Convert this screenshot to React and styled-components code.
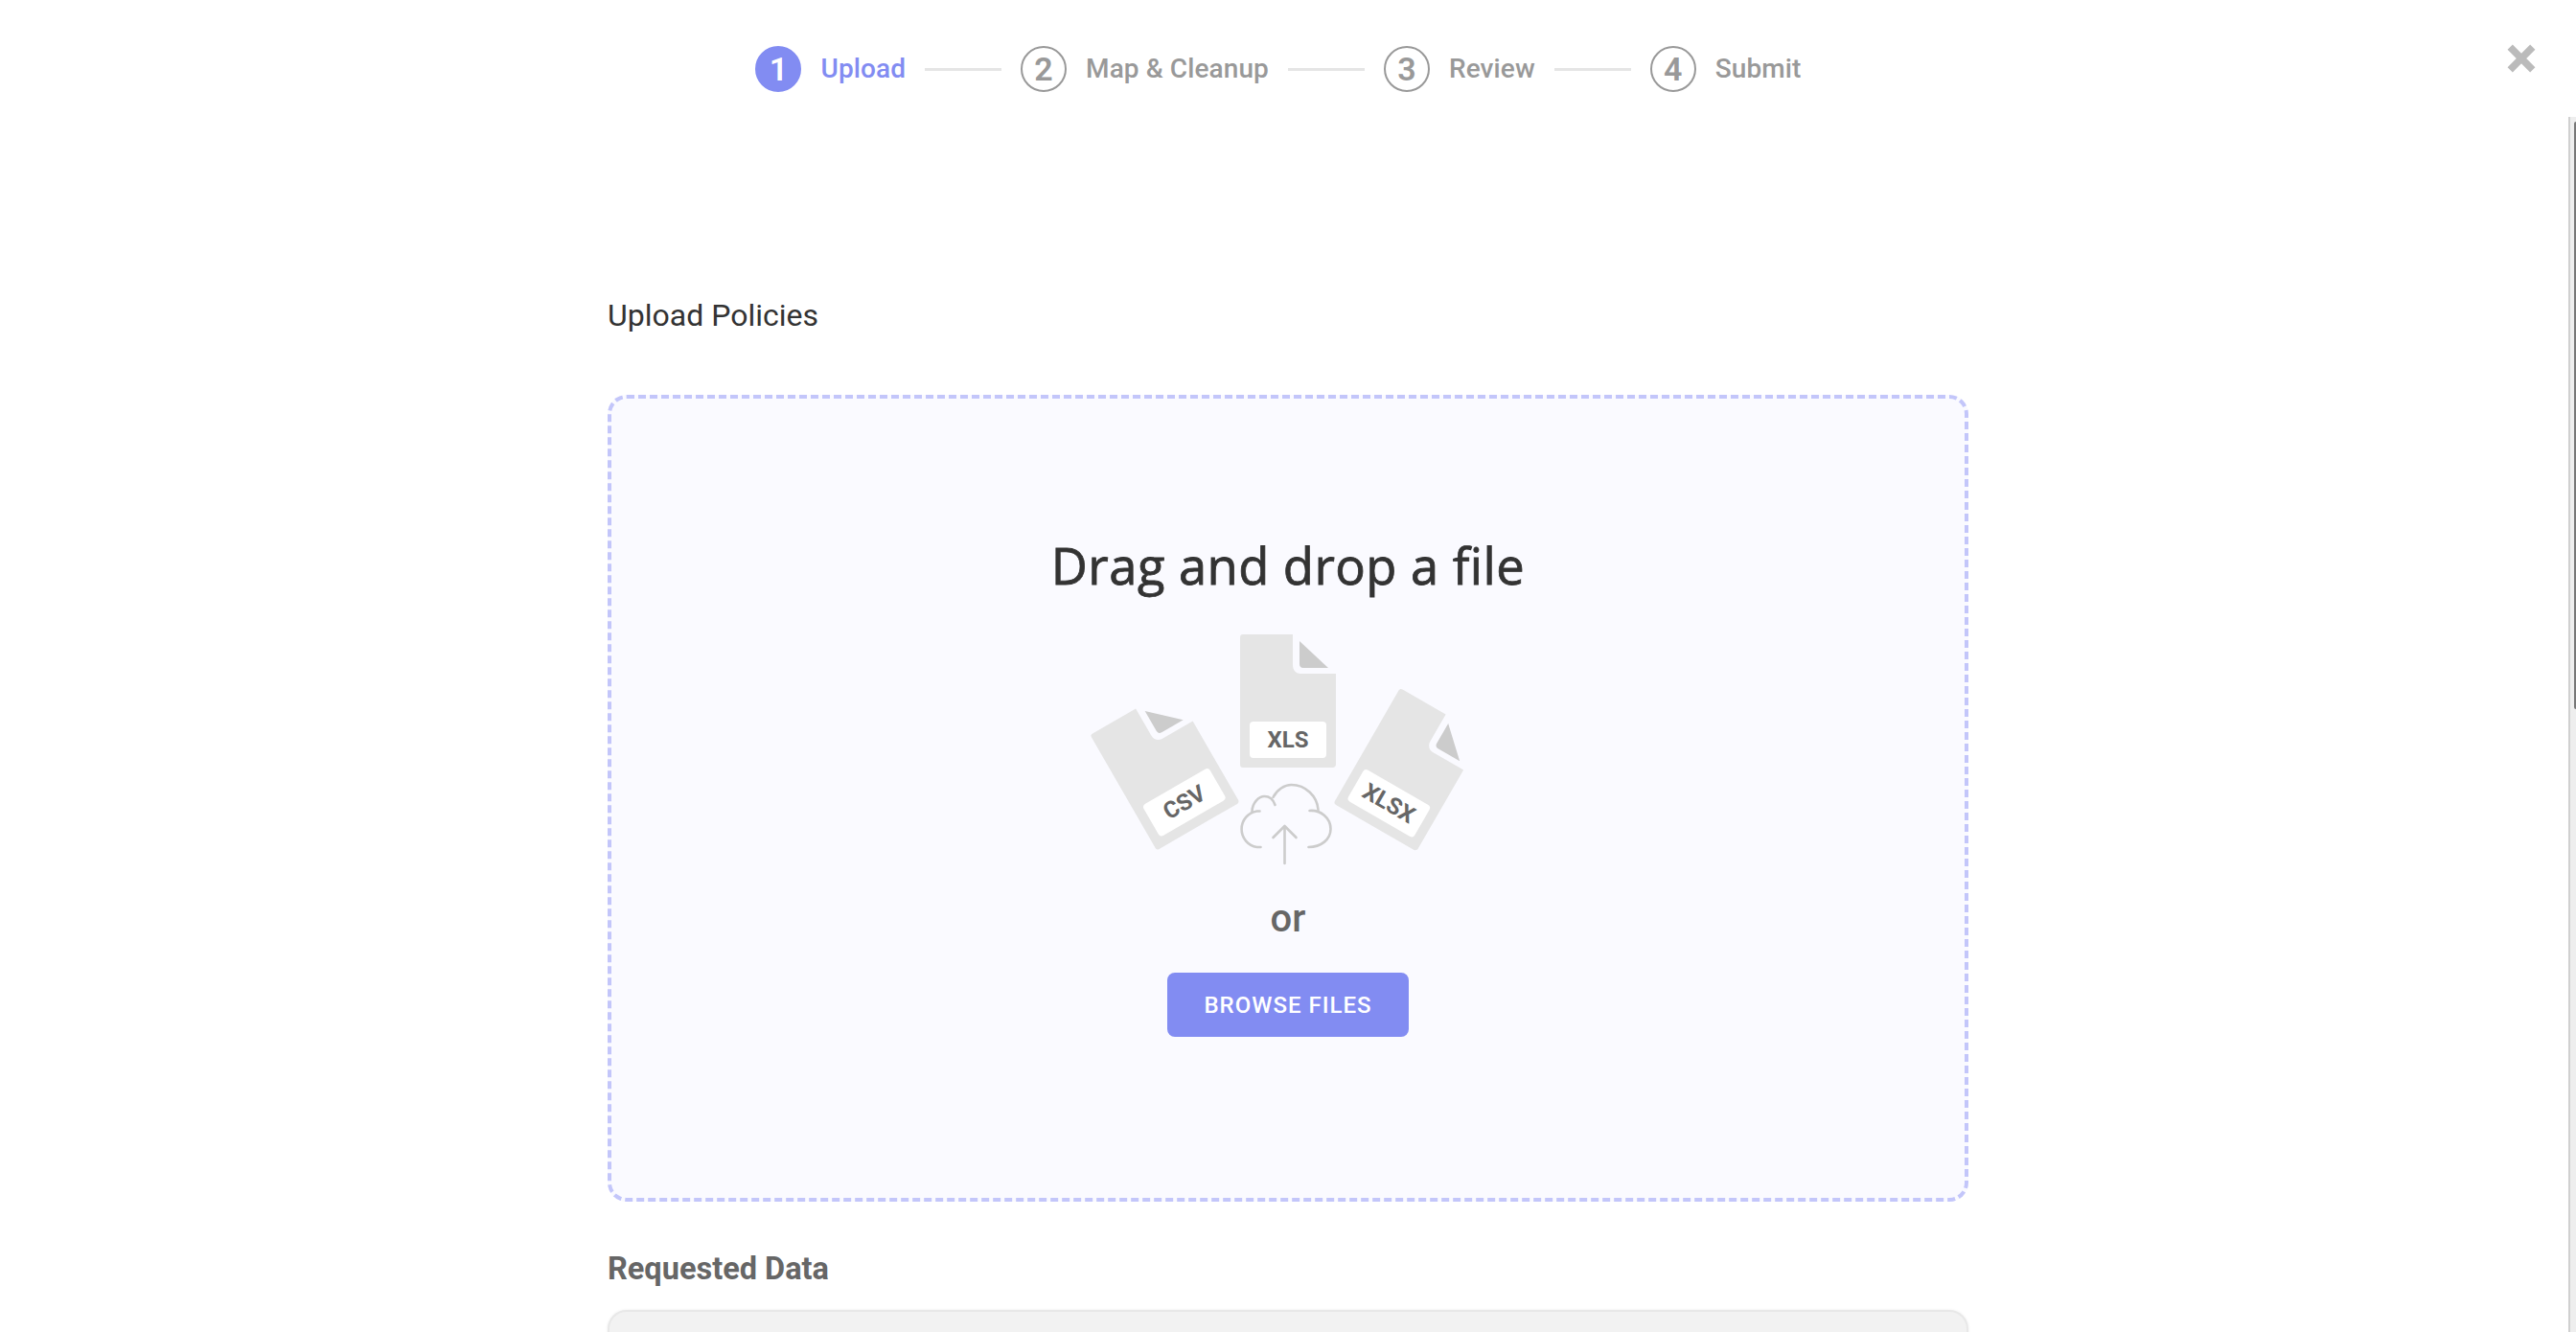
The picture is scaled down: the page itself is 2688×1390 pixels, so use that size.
import React from "react";
import styled, { createGlobalStyle } from "styled-components";

const STEPS = ["Upload", "Map & Cleanup", "Review", "Submit"];

const FileShape = ({ x, y, angle, label }) => (
  <g transform={`translate(${x} ${y}) rotate(${angle})`}>
    <path
      d="M3 0H55V32C55 38 59 41 63 41H100V136C100 138 98 139 97 139H3C1 139 0 138 0 136V3C0 1 1 0 3 0Z"
      fill="#e5e5e5"
    />
    <path d="M62 7L92 35H66C63 35 62 33 62 31Z" fill="#cccccc" />
    <rect x="10" y="91" width="80" height="38" rx="4" fill="#ffffff" />
    <text
      x="50"
      y="118"
      textAnchor="middle"
      fontFamily="Roboto, sans-serif"
      fontWeight="700"
      fontSize="24"
      fill="#666666"
    >
      {label}
    </text>
  </g>
);

const UploadArt = () => (
  <ArtSvg viewBox="0 0 468 250" width="468" height="250">
    <FileShape x={27.5} y={105} angle={-30} label="CSV" />
    <FileShape x={184} y={0} angle={0} label="XLS" />
    <FileShape x={351} y={56} angle={30} label="XLSX" />
    <g
      transform="translate(-1.5 0)"
      fill="none"
      stroke="#cccccc"
      strokeWidth="2.6"
      strokeLinecap="round"
      strokeLinejoin="round"
    >
      <path d="M207 222H203A19 19 0 0 1 203 184.5H206" />
      <path d="M198 185C198 176 205 169 211 169C216 169 220 172 222 178" />
      <path d="M220 170C224 162 232 157 239 157C254 157 266 169 267 183" />
      <path d="M258 184C270 183 280 192 280 203C280 214 270 222 257 222" />
      <path d="M232 239V200M220 212L232 200L244 212" />
    </g>
  </ArtSvg>
);

const App = () => (
  <Page>
    <GlobalStyle />
    <Header>
      <Stepper>
        {STEPS.map((step, i) => (
          <React.Fragment key={step}>
            {i > 0 && <StepLine />}
            <StepCircle $active={i === 0}>{i + 1}</StepCircle>
            <StepLabel $active={i === 0}>{step}</StepLabel>
          </React.Fragment>
        ))}
      </Stepper>
      <CloseButton aria-label="Close">
        <svg viewBox="0 0 28 28" width="30" height="30">
          <path d="M3 3L25 25M25 3L3 25" stroke="#bbbbbb" strokeWidth="7" />
        </svg>
      </CloseButton>
    </Header>
    <ScrollArea>
      <Content>
        <PageTitle>Upload Policies</PageTitle>
        <DropZone>
          <DropTitle>Drag and drop a file</DropTitle>
          <UploadArt />
          <OrText>or</OrText>
          <BrowseButton>BROWSE FILES</BrowseButton>
        </DropZone>
        <SectionTitle>Requested Data</SectionTitle>
        <DataPanel />
      </Content>
      <ScrollTrack>
        <ScrollThumb />
      </ScrollTrack>
    </ScrollArea>
  </Page>
);

const GlobalStyle = createGlobalStyle`
  html, body {
    margin: 0;
    padding: 0;
    height: 100%;
    background: #ffffff;
    overflow: hidden;
  }

  * {
    box-sizing: border-box;
  }
`;

const Page = styled.div`
  width: 100%;
  height: 100vh;
  display: flex;
  flex-direction: column;
  font-family: Roboto, "Liberation Sans", sans-serif;
  background: #ffffff;
`;

const Header = styled.header`
  position: relative;
  flex: 0 0 122px;
  height: 122px;
  display: flex;
  justify-content: center;
  padding: 48px 20px 0 0;
`;

const Stepper = styled.nav`
  height: 48px;
  display: flex;
  align-items: center;
  gap: 20px;
`;

const StepCircle = styled.span`
  width: 48px;
  height: 48px;
  border-radius: 50%;
  display: flex;
  align-items: center;
  justify-content: center;
  font-size: 34px;
  font-weight: 600;
  color: ${({ $active }) => ($active ? "#ffffff" : "#999999")};
  background: ${({ $active }) => ($active ? "#828cf2" : "#ffffff")};
  border: 2px solid ${({ $active }) => ($active ? "#828cf2" : "#999999")};
`;

const StepLabel = styled.span`
  padding-bottom: 2px;
  font-size: 28px;
  font-weight: 500;
  letter-spacing: 0.1px;
  color: ${({ $active }) => ($active ? "#828cf2" : "#999999")};
`;

const StepLine = styled.span`
  width: 80px;
  height: 3px;
  background: #e5e5e5;
`;

const CloseButton = styled.button`
  position: absolute;
  top: 46px;
  right: 42px;
  padding: 0;
  border: 0;
  background: none;
  display: flex;
`;

const ScrollArea = styled.main`
  position: relative;
  flex: 1;
  overflow: hidden;
`;

const Content = styled.div`
  width: 1420px;
  margin: 0 auto;
`;

const PageTitle = styled.h1`
  margin: 187px 0 0;
  height: 40px;
  line-height: 40px;
  font-size: 32px;
  font-weight: 400;
  color: #333333;
`;

const DropZone = styled.section`
  margin-top: 63px;
  height: 842px;
  padding-top: 144px;
  display: flex;
  flex-direction: column;
  align-items: center;
  background: #fafaff;
  border: 4px dashed #c3c6fa;
  border-radius: 20px;
`;

const DropTitle = styled.h2`
  margin: 0;
  height: 60px;
  line-height: 60px;
  font-family: "Open Sans", sans-serif;
  font-size: 52.5px;
  font-weight: 400;
  letter-spacing: 0.45px;
  -webkit-text-stroke: 0.8px #333333;
  white-space: nowrap;
  color: #333333;
`;

const ArtSvg = styled.svg`
  display: block;
  margin-top: 42px;
`;

const OrText = styled.div`
  margin-top: 25px;
  height: 44px;
  line-height: 44px;
  font-size: 40px;
  font-weight: 500;
  color: #666666;
`;

const BrowseButton = styled.button`
  margin-top: 34px;
  width: 252px;
  height: 67px;
  border: 0;
  border-radius: 8px;
  background: #828cf2;
  color: #ffffff;
  font-family: Roboto, sans-serif;
  font-size: 24px;
  font-weight: 500;
  letter-spacing: 1px;
`;

const SectionTitle = styled.h3`
  margin: 52px 0 0;
  height: 36px;
  line-height: 36px;
  font-size: 32.5px;
  font-weight: 700;
  color: #666666;
`;

const DataPanel = styled.div`
  margin-top: 25px;
  height: 200px;
  background: #f2f2f2;
  border: 2px solid #e8e8e8;
  border-radius: 20px;
  box-shadow: 0 0 3px rgba(0, 0, 0, 0.08);
`;

const ScrollTrack = styled.div`
  position: absolute;
  top: 0;
  right: 0;
  bottom: 0;
  width: 8px;
  background: #eeeeee;
  border-left: 2px solid #d0d0d0;
`;

const ScrollThumb = styled.div`
  margin: 5px 0 0 4px;
  height: 613px;
  background: #777777;
  border-radius: 4px 0 0 4px;
`;

export default App;
